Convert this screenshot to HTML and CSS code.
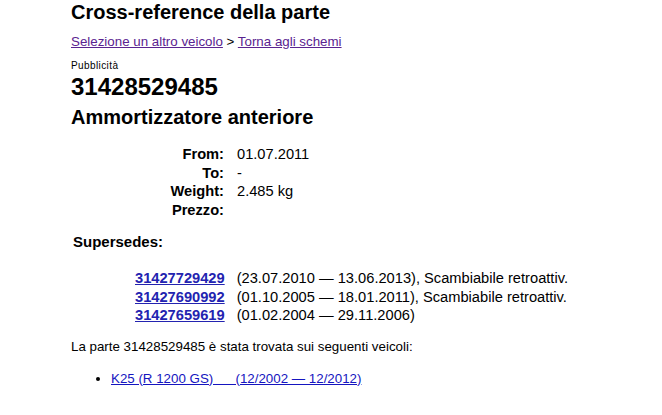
FILE: index.html
```html
<!DOCTYPE html>
<html lang="it">
<head>
<meta charset="utf-8">
<title>Cross-reference della parte</title>
<link rel="stylesheet" href="styles.css">
</head>
<body>
<div class="page">
  <h1 class="title">Cross-reference della parte</h1>
  <div class="crumbs"><a class="visited" href="#">Selezione un altro veicolo</a> &gt; <a class="visited" href="#">Torna agli schemi</a></div>
  <div class="ad">Pubblicità</div>
  <h2 class="partno">31428529485</h2>
  <h2 class="partname">Ammortizzatore anteriore</h2>
  <div class="specs">
    <div class="lbl">From:</div><div class="val">01.07.2011</div>
    <div class="lbl">To:</div><div class="val">-</div>
    <div class="lbl">Weight:</div><div class="val">2.485 kg</div>
    <div class="lbl">Prezzo:</div><div class="val"></div>
  </div>
  <h3 class="sup-title">Supersedes:</h3>
  <div class="sup">
    <a class="sup-link" href="#">31427729429</a><div class="sup-val">(23.07.2010 — 13.06.2013), Scambiabile retroattiv.</div>
    <a class="sup-link" href="#">31427690992</a><div class="sup-val">(01.10.2005 — 18.01.2011), Scambiabile retroattiv.</div>
    <a class="sup-link" href="#">31427659619</a><div class="sup-val">(01.02.2004 — 29.11.2006)</div>
  </div>
  <p class="found">La parte 31428529485 è stata trovata sui seguenti veicoli:</p>
  <ul class="vehicles">
    <li><a class="veh-link" href="#">K25 (R 1200 GS)&nbsp;&nbsp;&nbsp;&nbsp;&nbsp;&nbsp;(12/2002 — 12/2012)</a></li>
  </ul>
</div>
</body>
</html>
```
FILE: styles.css
```css
html, body {
  margin: 0;
  padding: 0;
  background: #ffffff;
}
body {
  font-family: "Liberation Sans", Arial, sans-serif;
  color: #000000;
}
.page {
  padding: 0 0 0 71px;
}
.title {
  margin: 0;
  padding-top: 1px;
  font-size: 20px;
  line-height: 23px;
  font-weight: bold;
}
.crumbs {
  margin-top: 10px;
  font-size: 13.33px;
  line-height: 16px;
}
.visited {
  color: #5a2390;
}
.ad {
  margin-top: 10px;
  font-size: 10px;
  line-height: 11px;
  letter-spacing: 0.4px;
}
.partno, .partname {
  margin: 0;
  font-weight: bold;
}
.partno {
  margin-top: 2px;
  font-size: 24px;
  line-height: 27px;
}
.partname {
  margin-top: 6px;
  font-size: 20px;
  line-height: 23px;
}
.specs {
  display: grid;
  grid-template-columns: 153px auto;
  column-gap: 13px;
  margin-top: 16px;
  font-size: 14.67px;
  line-height: 18.5px;
}
.lbl {
  text-align: right;
  font-weight: bold;
}
.sup-title {
  margin: 15px 0 0 2px;
  font-size: 15px;
  line-height: 16px;
  font-weight: bold;
}
.sup {
  display: grid;
  grid-template-columns: auto 1fr;
  column-gap: 12px;
  margin: 19px 0 0 64px;
  font-size: 14.67px;
  line-height: 18.5px;
}
.sup-link {
  color: #2323b0;
  font-weight: bold;
}
.found {
  margin: 14px 0 0;
  font-size: 13.33px;
  line-height: 16px;
}
.vehicles {
  margin: 16px 0 0;
  padding-left: 40px;
  font-size: 13.33px;
  line-height: 16px;
}
.veh-link {
  color: #1515c0;
}
```
